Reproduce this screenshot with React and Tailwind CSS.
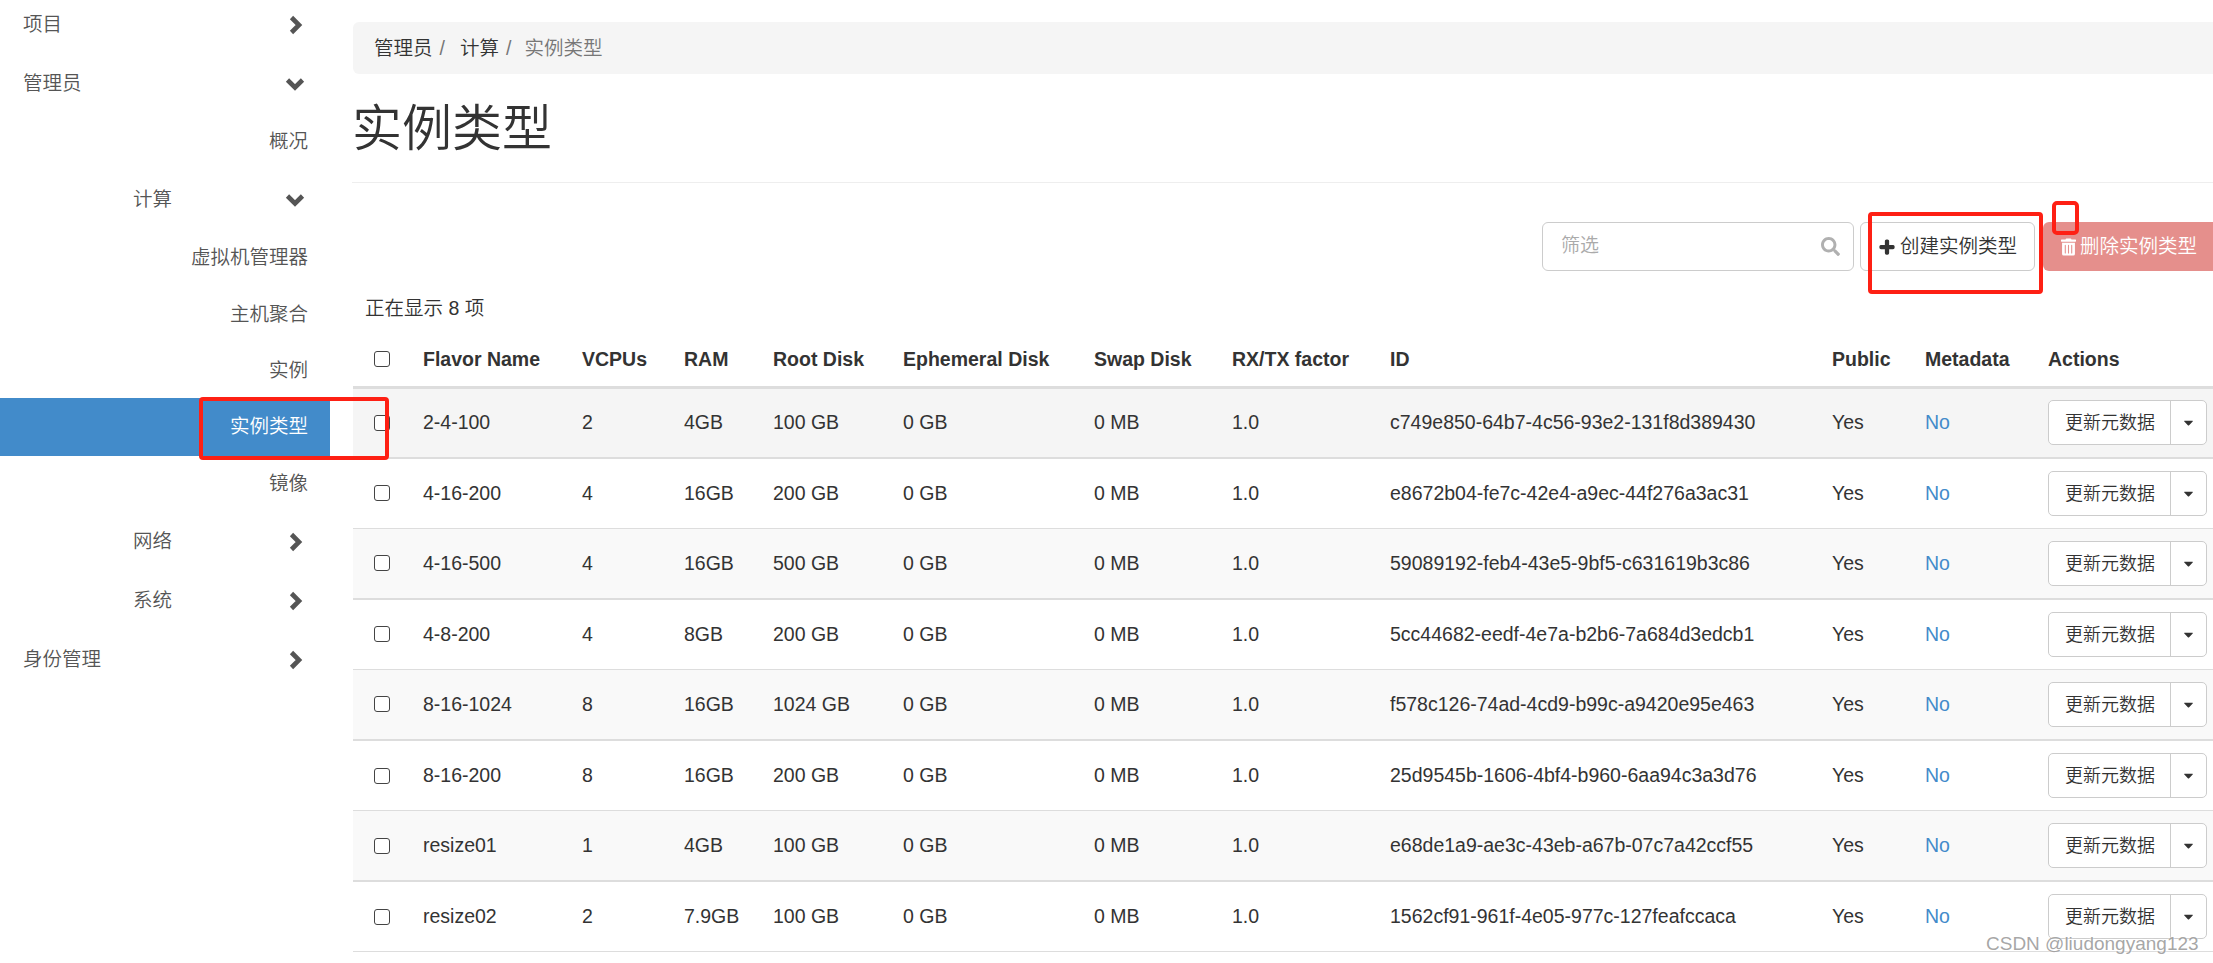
import { FaCaretDown, FaPlus, FaSearch, FaTrashAlt } from 'react-icons/fa'

const font = 'font-["Liberation_Sans","Noto_Sans_CJK_SC",sans-serif]'

const flavors = [
  ['2-4-100', '2', '4GB', '100 GB', 'c749e850-64b7-4c56-93e2-131f8d389430'],
  ['4-16-200', '4', '16GB', '200 GB', 'e8672b04-fe7c-42e4-a9ec-44f276a3ac31'],
  ['4-16-500', '4', '16GB', '500 GB', '59089192-feb4-43e5-9bf5-c631619b3c86'],
  ['4-8-200', '4', '8GB', '200 GB', '5cc44682-eedf-4e7a-b2b6-7a684d3edcb1'],
  ['8-16-1024', '8', '16GB', '1024 GB', 'f578c126-74ad-4cd9-b99c-a9420e95e463'],
  ['8-16-200', '8', '16GB', '200 GB', '25d9545b-1606-4bf4-b960-6aa94c3a3d76'],
  ['resize01', '1', '4GB', '100 GB', 'e68de1a9-ae3c-43eb-a67b-07c7a42ccf55'],
  ['resize02', '2', '7.9GB', '100 GB', '1562cf91-961f-4e05-977c-127feafccaca'],
]

const columns = [
  ['Flavor Name', 'w-[159px]'],
  ['VCPUs', 'w-[102px]'],
  ['RAM', 'w-[89px]'],
  ['Root Disk', 'w-[130px]'],
  ['Ephemeral Disk', 'w-[191px]'],
  ['Swap Disk', 'w-[138px]'],
  ['RX/TX factor', 'w-[158px]'],
  ['ID', 'w-[442px]'],
  ['Public', 'w-[93px]'],
  ['Metadata', 'w-[123px]'],
  ['Actions', 'w-[176px]'],
]

function Chevron({ open }) {
  return (
    <svg viewBox="0 0 20 20" className="w-[20px] h-[20px] -mr-[1px]" fill="none" stroke="#555" strokeWidth="4.6">
      <path d={open ? 'M2.5 6 L10 13.5 L17.5 6' : 'M6.5 2.5 L14 10 L6.5 17.5'} />
    </svg>
  )
}

function Group({ label, open, indent }) {
  return (
    <li className={`flex h-[59px] items-center justify-between text-[#555] pr-[26px] ${indent ? 'pl-[133px]' : 'pl-[23px]'}`}>
      <span>{label}</span>
      <Chevron open={open} />
    </li>
  )
}

function Leaf({ label, active, height = 'h-[56.5px]' }) {
  return (
    <li className={`flex items-center justify-end pr-[22px] ${height} ${active ? 'bg-[#428bca] text-white' : 'text-[#555]'}`}>
      {label}
    </li>
  )
}

function Sidebar() {
  return (
    <ul className="w-[330px] -mt-[5px] shrink-0">
      <Group label="项目" />
      <Group label="管理员" open />
      <Leaf label="概况" height="h-[57.5px]" />
      <Group label="计算" open indent />
      <Leaf label="虚拟机管理器" />
      <Leaf label="主机聚合" />
      <Leaf label="实例" height="h-[55.5px]" />
      <Leaf label="实例类型" active height="h-[58px]" />
      <Leaf label="镜像" height="h-[56.5px] pb-[2px]" />
      <Group label="网络" indent />
      <Group label="系统" indent />
      <Group label="身份管理" />
    </ul>
  )
}

function Check() {
  return <input type="checkbox" className="appearance-none block w-[16px] h-[16px] border border-[#444] rounded-[3px] bg-white" />
}

function FlavorRow({ flavor, index }) {
  const [name, vcpus, ram, disk, id] = flavor
  const stripe = index === 0 ? 'bg-[#f5f5f5]' : index % 2 === 0 ? 'bg-[#f9f9f9]' : 'bg-white'
  const line = index % 2 === 0 ? 'border-b-2' : 'border-b'
  return (
    <tr className={`h-[70.6px] border-[#ddd] ${stripe} ${line}`}>
      <td className="pl-[21px]"><Check /></td>
      <td className="px-[11px]">{name}</td>
      <td className="px-[11px]">{vcpus}</td>
      <td className="px-[11px]">{ram}</td>
      <td className="px-[11px]">{disk}</td>
      <td className="px-[11px]">0 GB</td>
      <td className="px-[11px]">0 MB</td>
      <td className="px-[11px]">1.0</td>
      <td className="px-[11px]">{id}</td>
      <td className="px-[11px]">Yes</td>
      <td className="px-[11px] text-[#428bca]">No</td>
      <td className="pl-[11px]">
        <div className="flex w-[159px] h-[45px] rounded-[5px] border border-[#ccc] bg-white text-[18px]">
          <span className="flex w-[122px] items-center justify-center border-r border-[#ccc] pt-[2px] pl-[1px]">更新元数据</span>
          <span className="flex flex-1 items-center justify-center"><FaCaretDown className="w-[15px] h-[15px] text-[#333]" /></span>
        </div>
      </td>
    </tr>
  )
}

export default function App() {
  return (
    <div className={`relative flex w-[2213px] h-[963px] overflow-hidden bg-white text-[#333] text-[19.5px] font-[350] ${font}`}>
      <div className="w-[353px] shrink-0">
        <Sidebar />
      </div>

      <main className="flex-1 min-w-0 pt-[22px]">
        <nav className="flex h-[52px] items-center gap-[8px] rounded-l-[6px] bg-[#f5f5f5] pl-[21px] pt-[2px]">
          <span>管理员</span>
          <span className="text-[#777] -ml-[1px]">/</span>
          <span className="ml-[7px]">计算</span>
          <span className="text-[#777] -ml-[1px]">/</span>
          <span className="ml-[5px] text-[#777]">实例类型</span>
        </nav>

        <h1 className="flex h-[109px] items-center border-b border-[#eee] -ml-[1px] pt-[3px] text-[50px] text-[#333] font-[350]">实例类型</h1>

        <div className="flex h-[49px] mt-[39px] pl-[1189px] text-[19px]">
          <div className="flex w-[312px] shrink-0 items-center justify-between rounded-[6px] border border-[#ccc] pl-[18px] pr-[13px] text-[#aaa]">
            <span>筛选</span>
            <FaSearch className="w-[19px] h-[19px] text-[#b0b0b0]" />
          </div>
          <div className="flex w-[175px] shrink-0 ml-[6px] items-center gap-[5px] rounded-[6px] border border-[#ccc] pl-[18px]">
            <FaPlus className="w-[16px] h-[16px]" stroke="currentColor" strokeWidth={40} />
            <span className="text-[19.5px]">创建实例类型</span>
          </div>
          <div className="flex w-[190px] shrink-0 ml-[8px] items-center gap-[4px] rounded-l-[6px] bg-[#e58f8c] pl-[18px] text-white">
            <FaTrashAlt className="w-[15px] h-[18px]" />
            <span className="text-[19.5px]">删除实例类型</span>
          </div>
        </div>

        <p className="mt-[24px] pl-[12px] h-[27px] leading-[27px]">正在显示 8 项</p>

        <table className="table-fixed w-[1860px] mt-[6px] border-collapse">
          <thead>
            <tr className="h-[59px] border-b-[3px] border-[#ddd] text-left">
              <th className="w-[59px] pl-[21px] pt-[5px] font-normal"><Check /></th>
              {columns.map(([title, width]) => (
                <th key={title} className={`${width} px-[11px] pt-[5px] font-bold`}>{title}</th>
              ))}
            </tr>
          </thead>
          <tbody>
            {flavors.map((flavor, index) => (
              <FlavorRow key={flavor[0]} flavor={flavor} index={index} />
            ))}
          </tbody>
        </table>
      </main>

      {/* red marks drawn over the screenshot */}
      <div className="absolute left-[199px] top-[397px] w-[190px] h-[63px] rounded-[4px] border-[4px] border-[#fe2014]" />
      <div className="absolute left-[1868px] top-[212px] w-[175px] h-[82px] rounded-[4px] border-[4px] border-[#fe2014]" />
      <div className="absolute left-[2052px] top-[201px] w-[27px] h-[34px] rounded-[5px] border-[4px] border-[#fe2014]" />

      <div className="absolute left-[1986px] top-[930px] text-[19px] text-[#8f8f8f]/80 [text-shadow:0_0_2px_white]">CSDN @liudongyang123</div>
    </div>
  )
}
